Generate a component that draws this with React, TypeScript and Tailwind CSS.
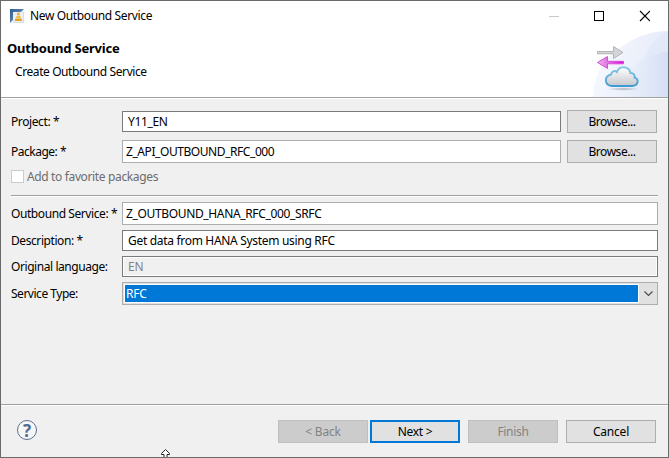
import type { ReactNode } from "react";

function Label({ children, className = "" }: { children: ReactNode; className?: string }) {
  return <label className={`w-[111px] shrink-0 whitespace-pre ${className}`}>{children}</label>;
}

function Button({ children, className = "" }: { children: ReactNode; className?: string }) {
  return (
    <button
      className={`flex h-[23px] w-[90px] shrink-0 items-center justify-center whitespace-pre border ${className}`}
    >
      {children}
    </button>
  );
}

function Field({ children, className = "" }: { children: ReactNode; className?: string }) {
  return <div className={`flex items-center whitespace-pre border ${className}`}>{children}</div>;
}

function AppIcon() {
  return (
    <svg width="14" height="14" viewBox="0 0 14 14" className="shrink-0">
      <defs>
        <linearGradient id="appBlue" x1="0" y1="0" x2="1" y2="1">
          <stop offset="0" stopColor="#2b5c92" />
          <stop offset="1" stopColor="#7fa5cc" />
        </linearGradient>
      </defs>
      <path d="M0 0H14L11 3H4V10L0 14Z" fill="url(#appBlue)" />
      <rect x="3" y="3" width="10.5" height="10" fill="#eceef2" />
      <path d="M13.5 3V13.5H3" fill="none" stroke="#d5dce6" />
      <path d="M7.6 3.5H9.2L10 6.3H6.8Z" fill="#e9a92c" />
      <path d="M6.5 7H10.3L10.9 9H5.9Z" fill="#f3bd48" />
      <path d="M5.4 9.5H11.4L12.2 12H4.6Z" fill="#e6a221" />
    </svg>
  );
}

function Banner() {
  return (
    <svg width="76" height="66" viewBox="0 0 76 66" className="mt-auto shrink-0">
      <defs>
        <linearGradient id="sweep" x1="0" y1="0" x2="1" y2="0.2">
          <stop offset="0" stopColor="#f7f9fe" />
          <stop offset="1" stopColor="#e6ecf9" />
        </linearGradient>
        <linearGradient id="sweepInner" x1="0" y1="0" x2="1" y2="0">
          <stop offset="0" stopColor="#eef2fb" stopOpacity="0.2" />
          <stop offset="1" stopColor="#d5dff4" />
        </linearGradient>
        <linearGradient id="cloudFill" x1="0" y1="0" x2="0" y2="1">
          <stop offset="0" stopColor="#ffffff" />
          <stop offset="1" stopColor="#c6c8cd" />
        </linearGradient>
        <linearGradient id="cloudLine" x1="0" y1="0" x2="0" y2="1">
          <stop offset="0" stopColor="#8bcbe5" />
          <stop offset="1" stopColor="#3d9bd0" />
        </linearGradient>
        <linearGradient id="magenta" x1="0" y1="0" x2="1" y2="0">
          <stop offset="0" stopColor="#e7b8e7" />
          <stop offset="0.7" stopColor="#dc3bdc" />
          <stop offset="1" stopColor="#cc00cc" />
        </linearGradient>
        <radialGradient id="shade">
          <stop offset="0" stopColor="#8f96a5" stopOpacity="0.7" />
          <stop offset="1" stopColor="#8f96a5" stopOpacity="0" />
        </radialGradient>
      </defs>
      <path d="M1 66C2 43 13 25 32 14C46 5 60 0 76 0V66Z" fill="url(#sweep)" />
      <path d="M18 66C28 44 44 25 76 20V66Z" fill="url(#sweepInner)" />
      <path d="M51 28C57 15 65 5 76 0V20C66 21 58 24 51 28Z" fill="#d7e1f5" opacity="0.35" />
      <path d="M5.5 20.5H21.5V15.5L31 21.5L21.5 27.5V22.8H5.5Z" fill="#d3d4d6" stroke="#b2b4b7" />
      <path d="M31.5 30.3H15.5V25.5L5.5 31.5L15.5 37.5V32.8H31.5Z" fill="url(#magenta)" stroke="#dc4cdc" />
      <ellipse cx="31" cy="58" rx="16" ry="1.8" fill="url(#shade)" />
      <path
        d="M20 55C12 54 12 45 19 43.5C20 40 23 39 25 41C27 34.5 37 34.5 38.5 42C42 42 43 44 42.5 46.5C48 48 46 55 40 55Z"
        fill="url(#cloudFill)"
        stroke="url(#cloudLine)"
        strokeWidth="1.9"
      />
    </svg>
  );
}

export default function App() {
  return (
    <div className="relative flex h-[458px] w-[669px] flex-col overflow-hidden border border-[#6a6a6a] bg-[#f0f0f0] font-['Noto_Sans','Open_Sans',sans-serif] text-[12px] leading-[16px] text-black">
      <header className="flex h-[96px] shrink-0 flex-col bg-white">
        <div className="flex h-[30px] shrink-0 items-center pl-[9px]">
          <AppIcon />
          <span className="ml-[6px] w-[519px] whitespace-pre tracking-[-0.36px]">New Outbound Service</span>
          <svg width="101" height="12" viewBox="0 0 101 12" fill="none" shapeRendering="crispEdges">
            <path d="M0 6.5H10" stroke="#c8c8c8" />
            <rect x="45.5" y="1.5" width="9" height="9" stroke="#000" />
            <path d="M91 1L101 11M101 1L91 11" stroke="#000" shapeRendering="auto" strokeWidth="1.1" />
          </svg>
        </div>
        <div className="flex min-h-0 flex-1">
          <div className="w-[591px] pl-[6px] pt-[9px]">
            <h1 className="whitespace-pre text-[13px] font-bold leading-[16px] tracking-[-0.2px]">Outbound Service</h1>
            <p className="mt-[8px] whitespace-pre pl-[8px] tracking-[-0.41px]">Create Outbound Service</p>
          </div>
          <Banner />
        </div>
      </header>
      <div className="h-[2px] shrink-0 border-t border-[#a0a0a0] bg-white" />

      <main className="flex h-[305px] shrink-0 flex-col pl-[10px] pt-[11px]">
        <div className="flex h-[23px] items-center">
          <Label className="tracking-[-0.4px]">Project: *</Label>
          <Field className="h-[21px] w-[439px] border-[#7a7a7a] bg-white pl-[5px] tracking-[-0.35px]">Y11_EN</Field>
          <Button className="ml-[6px] border-[#adadad] bg-[#e1e1e1] tracking-[-0.45px]">Browse...</Button>
        </div>
        <div className="mt-[7px] flex h-[23px] items-center">
          <Label className="tracking-[-0.5px]">Package: *</Label>
          <Field className="h-[23px] w-[439px] border-[#abadb3] bg-white pl-[3px] tracking-[-0.43px]">Z_API_OUTBOUND_RFC_000</Field>
          <Button className="ml-[6px] border-[#adadad] bg-[#e1e1e1] tracking-[-0.45px]">Browse...</Button>
        </div>
        <div className="mt-[7px] flex h-[13px] items-center text-[#6d6d6d]">
          <span className="size-[13px] border border-[#cccccc] bg-white" />
          <span className="ml-[3px] whitespace-pre tracking-[-0.36px]">Add to favorite packages</span>
        </div>
        <div className="mt-[12px] h-[2px] w-[647px] border-t border-[#a0a0a0] bg-white" />
        <div className="mt-[5px] flex h-[23px] items-center">
          <Label className="tracking-[-0.42px]">Outbound Service: *</Label>
          <Field className="h-[23px] w-[536px] border-[#abadb3] bg-white pl-[3px] tracking-[-0.35px]">Z_OUTBOUND_HANA_RFC_000_SRFC</Field>
        </div>
        <div className="mt-[5px] flex h-[21px] items-center">
          <Label className="tracking-[-0.42px]">Description: *</Label>
          <Field className="h-[21px] w-[536px] border-[#7a7a7a] bg-white pl-[5px] tracking-[-0.31px]">Get data from HANA System using RFC</Field>
        </div>
        <div className="mt-[5px] flex h-[21px] items-center">
          <Label className="tracking-[-0.43px]">Original language:</Label>
          <Field className="h-[21px] w-[536px] border-[#7a7a7a] bg-[#f0f0f0] pl-[5px] tracking-[-0.2px] text-[#838383] shadow-[inset_0_0_0_1px_#fff]">EN</Field>
        </div>
        <div className="mt-[5px] flex h-[23px] items-center">
          <Label className="tracking-[-0.48px]">Service Type:</Label>
          <div className="flex h-[23px] w-[536px] border border-[#adadad] bg-[#e1e1e1] p-px">
            <div className="flex w-[515px] items-center border border-white bg-[#0078d7] pl-px tracking-[-0.2px] text-white">RFC</div>
            <svg width="17" height="19" viewBox="0 0 17 19" fill="none">
              <path d="M5.5 7.5L9.5 11.5L13.5 7.5" stroke="#4b4b4b" strokeWidth="1.2" />
            </svg>
          </div>
        </div>
      </main>

      <div className="h-[2px] shrink-0 border-t border-[#a0a0a0] bg-white" />
      <footer className="flex flex-1 items-start pl-[16px] pt-[14px]">
        <div className="flex size-[20px] items-center justify-center rounded-full border border-[#586f91] bg-[#f7f7f7] text-[17px] font-bold leading-none text-[#526b90]">
          ?
        </div>
        <Button className="ml-[241px] border-[#bfbfbf] bg-[#cccccc] tracking-[-0.2px] text-[#838383]">{"< Back"}</Button>
        <Button className="ml-[2px] border-2 border-[#0078d7] bg-[#e1e1e1] tracking-[-0.3px]">{"Next >"}</Button>
        <Button className="ml-[8px] border-[#bfbfbf] bg-[#cccccc] tracking-[-0.3px] text-[#838383]">Finish</Button>
        <Button className="ml-[8px] border-[#adadad] bg-[#e1e1e1] tracking-[-0.2px]">Cancel</Button>
      </footer>
      {/* Resize pointer overlapping the lower window edge */}
      <svg className="absolute left-[160px] top-[448px]" width="10" height="9" viewBox="0 0 10 9">
        <path d="M4.5 .5L8.5 4.5V5.5H6V9H3V5.5H.5V4.5Z" fill="#fff" stroke="#222" />
      </svg>
    </div>
  );
}
